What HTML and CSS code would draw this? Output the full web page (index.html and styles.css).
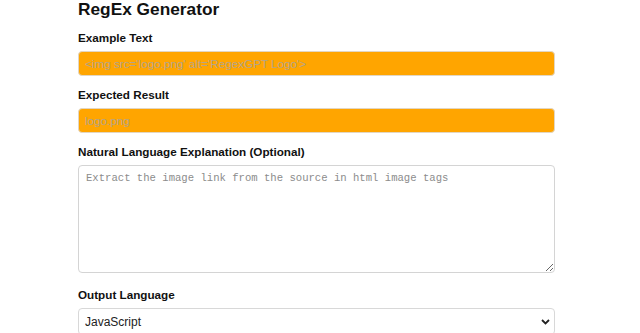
FILE: index.html
```html
<!DOCTYPE html>
<html>
	<head>
		<meta charset="UTF-8">
		<title>RegEx Generator</title>
		<link rel="stylesheet" href="styles.css">
	</head>
	<body>
		<div class="wrap">
			<h1 class="title">RegEx Generator</h1>

			<!--示例文本-->
			<div class="field">
				<label class="label" for="example">Example Text</label>
				<input id="example" class="text hot" type="text" placeholder="<img src='logo.png' alt='RegexGPT Logo'>">
			</div>

			<!--期望结果-->
			<div class="field">
				<label class="label" for="expected">Expected Result</label>
				<input id="expected" class="text hot" type="text" placeholder="logo.png">
			</div>

			<div class="field">
				<label class="label" for="explain">Natural Language Explanation (Optional)</label>
				<textarea id="explain" class="area" placeholder="Extract the image link from the source in html image tags"></textarea>
			</div>

			<div class="field">
				<label class="label" for="lang">Output Language</label>
				<div class="pick">
					<select id="lang" class="select">
						<option>JavaScript</option>
						<option>Python</option>
						<option>PHP</option>
					</select>
					<svg class="chev" width="9" height="6" viewBox="0 0 9 6"><path d="M1 1 L4.5 4.5 L8 1" fill="none" stroke="#222" stroke-width="1.8"/></svg>
				</div>
			</div>
		</div>
	</body>
</html>
```

FILE: styles.css
```css
*{
	margin: 0px;
	padding: 0px;
	box-sizing: border-box;
}

body{
	font-family: "Liberation Sans", Arial, sans-serif;
	color: #111;
	background: #fff;
}

.wrap{
	width: 477px;
	margin-left: 78px;
}

.title{
	font-size: 17.3px;
	font-weight: bold;
	margin-top: -1px;
	margin-bottom: 11px;
}

.field{
	margin-bottom: 12px;
}

.label{
	display: block;
	font-size: 11.7px;
	font-weight: bold;
	line-height: 14px;
	margin-bottom: 6px;
}

/*输入框*/
.text{
	display: block;
	width: 100%;
	height: 25px;
	padding: 0 6px;
	font-family: "Liberation Sans", Arial, sans-serif;
	font-size: 11.7px;
	border: 1px solid #e2d6c2;
	border-radius: 4px;
	outline: none;
}

.hot{
	background-color: #ffa500;
}

.hot::placeholder{
	color: #b3a48a;
}

.area{
	display: block;
	width: 100%;
	height: 108px;
	padding: 6px 7px;
	font-family: "Liberation Mono", monospace;
	font-size: 10.6px;
	border: 1px solid #d4d4d4;
	border-radius: 4px;
	outline: none;
	/*和外层的12px外边距合并 所以取15*/
	margin-bottom: 15px;
}

.area::placeholder{
	color: #8c8c8c;
}

/*下拉框*/
.pick{
	position: relative;
}

.select{
	display: block;
	width: 100%;
	height: 27px;
	padding: 0 6px;
	font-family: "Liberation Sans", Arial, sans-serif;
	font-size: 12px;
	color: #222;
	background: #fff;
	border: 1px solid #d8d8d8;
	border-radius: 4px;
	-webkit-appearance: none;
	appearance: none;
	outline: none;
}

.chev{
	position: absolute;
	right: 5px;
	top: 11px;
	pointer-events: none;
}
```
